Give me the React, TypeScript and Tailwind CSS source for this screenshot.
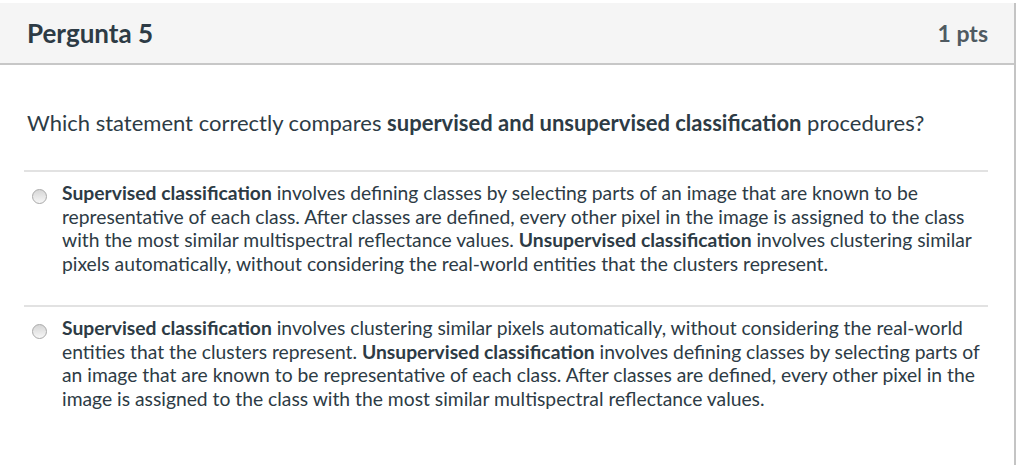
const answers = [
  [
    { b: true, t: 'Supervised classification' },
    { b: false, t: ' involves defining classes by selecting parts of an image that are known to be representative of each class. After classes are defined, every other pixel in the image is assigned to the class with the most similar multispectral reflectance values. ' },
    { b: true, t: 'Unsupervised classification' },
    { b: false, t: ' involves clustering similar pixels automatically, without considering the real-world entities that the clusters represent.' },
  ],
  [
    { b: true, t: 'Supervised classification' },
    { b: false, t: ' involves clustering similar pixels automatically, without considering the real-world entities that the clusters represent. ' },
    { b: true, t: 'Unsupervised classification' },
    { b: false, t: ' involves defining classes by selecting parts of an image that are known to be representative of each class. After classes are defined, every other pixel in the image is assigned to the class with the most similar multispectral reflectance values.' },
  ],
];

function Radio() {
  return (
    <span className="mt-[8px] block h-[15px] w-[15px] shrink-0 rounded-full border border-[#a9a9a9] bg-gradient-to-b from-[#d6d6d6] to-[#f7f7f7]" />
  );
}

export default function App() {
  return (
    <div
      className="h-[465px] w-[1024px] overflow-hidden bg-white pt-[3px] text-[#2d3b45]"
      style={{ fontFamily: 'Lato, "Liberation Sans", sans-serif' }}
    >
      <div className="mr-[8px] h-[462px] border-r-2 border-[#c4c4c4]">
        <div className="flex h-[62px] items-center justify-between border-b-2 border-[#c7c7c7] bg-[#f5f5f5] pl-[27px] pr-[26px]">
          <h2 className="text-[26px] font-bold leading-[30px]">Pergunta 5</h2>
          <span className="text-[23px] font-bold leading-[30px] text-[#4f5a61]">1 pts</span>
        </div>
        <div className="pl-[24px] pr-[26px]">
          <p className="pl-[3px] pt-[43px] text-[22px] leading-[30px]">
            Which statement correctly compares <b>supervised and unsupervised classification</b> procedures?
          </p>
          <div className="mt-[32px]">
            {answers.map((a, i) => (
              <div key={i} className="flex gap-[15px] border-t-2 border-[#e2e2e2] pb-[30px] pl-[8px] pt-[9px]">
                <Radio />
                <p className="text-[19.3px] leading-[23.5px]">
                  {a.map((s, j) => (s.b ? <b key={j}>{s.t}</b> : <span key={j}>{s.t}</span>))}
                </p>
              </div>
            ))}
          </div>
        </div>
      </div>
    </div>
  );
}
